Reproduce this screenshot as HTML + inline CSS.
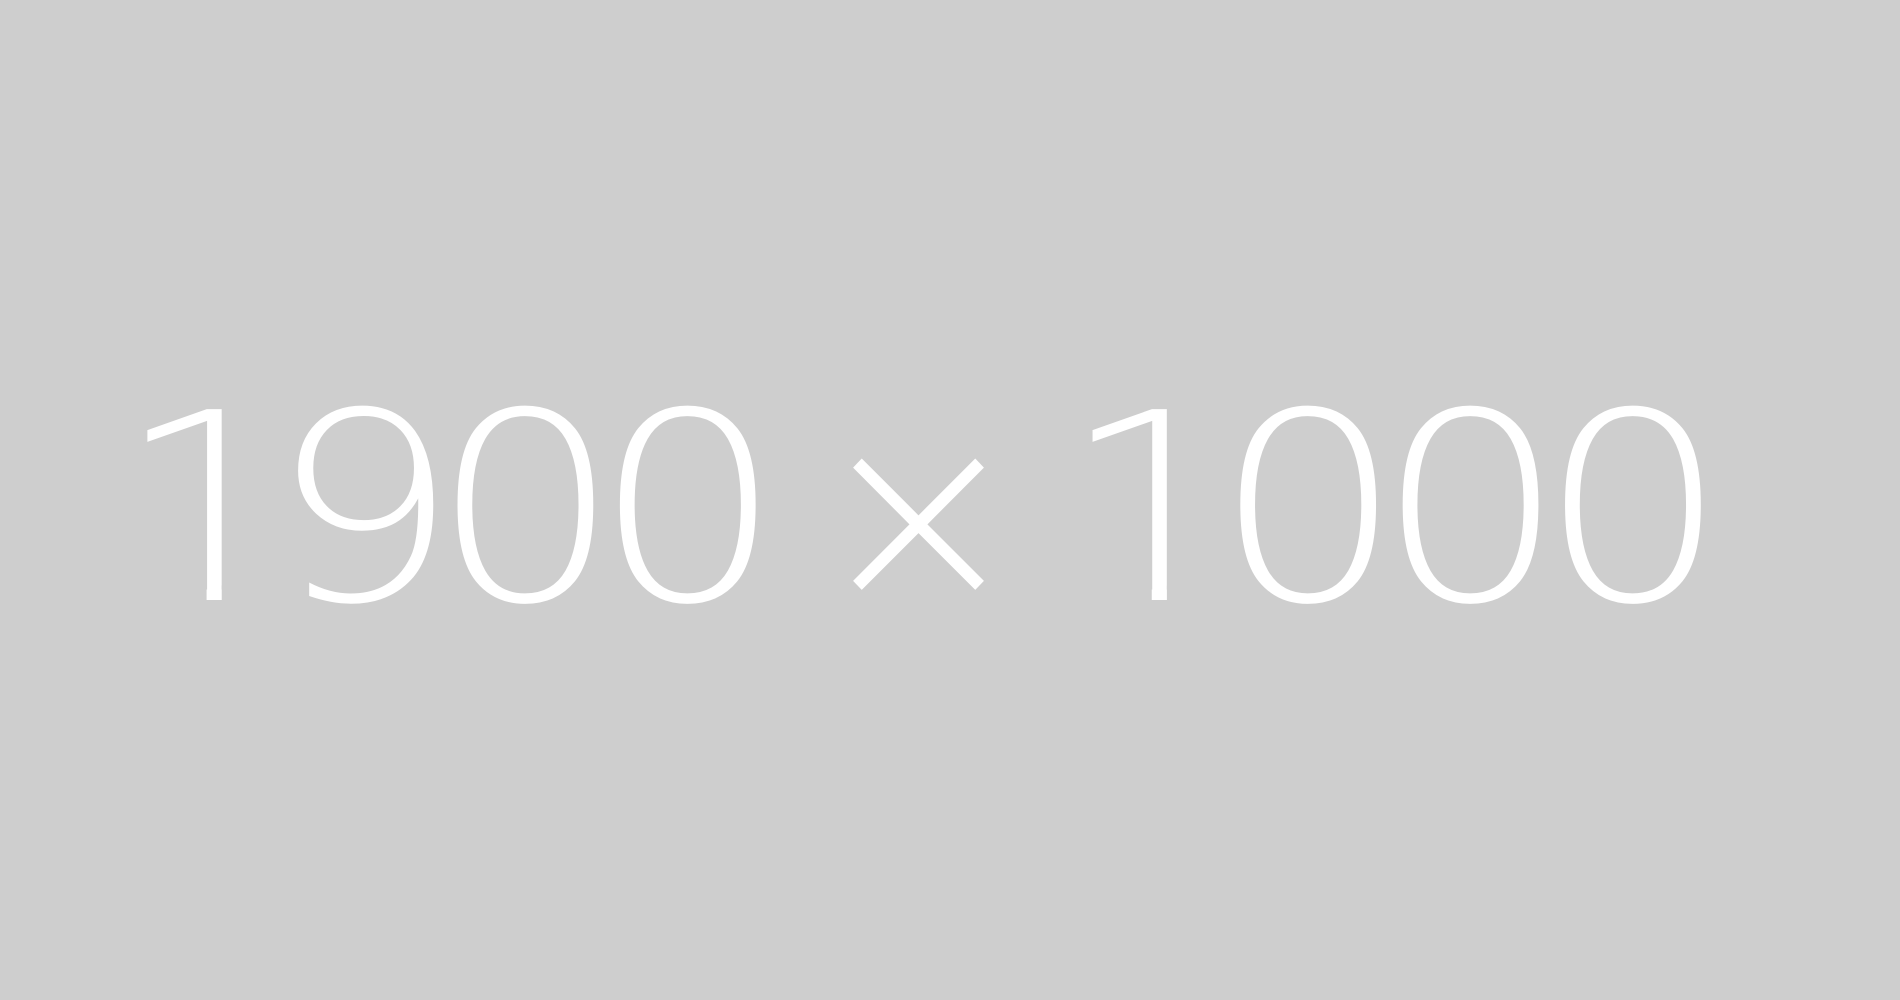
<!DOCTYPE html>
<html><head><meta charset="utf-8"><style>
html,body{margin:0;padding:0;background:#cecece;width:1900px;height:1000px;overflow:hidden}
svg{display:block}
text{font-family:'DejaVu Sans',sans-serif;font-weight:200;fill:#fff;text-anchor:middle}
</style></head><body>
<svg width="1900" height="1000" viewBox="0 0 1568 825" preserveAspectRatio="none">
<rect width="1568" height="825" fill="#cecece"/>
<g font-size="216">
<text transform="translate(173,495) scale(1.142,1)">1</text>
<text transform="translate(300.5,495) scale(1.142,1)">9</text>
<text transform="translate(434,495) scale(1.142,1)">0</text>
<text transform="translate(568,495) scale(1.142,1)">0</text>
<text transform="translate(953,495) scale(1.142,1)">1</text>
<text transform="translate(1080,495) scale(1.142,1)">0</text>
<text transform="translate(1214,495) scale(1.142,1)">0</text>
<text transform="translate(1348,495) scale(1.142,1)">0</text>
</g>
<text font-size="209" transform="translate(758,498) scale(1.0,1)">×</text>
<rect x="110" y="483" width="60.5" height="20" fill="#cecece"/>
<rect x="183" y="483" width="60" height="20" fill="#cecece"/>
<rect x="890" y="483" width="60.5" height="20" fill="#cecece"/>
<rect x="963" y="483" width="60" height="20" fill="#cecece"/>
</svg>
</body></html>
